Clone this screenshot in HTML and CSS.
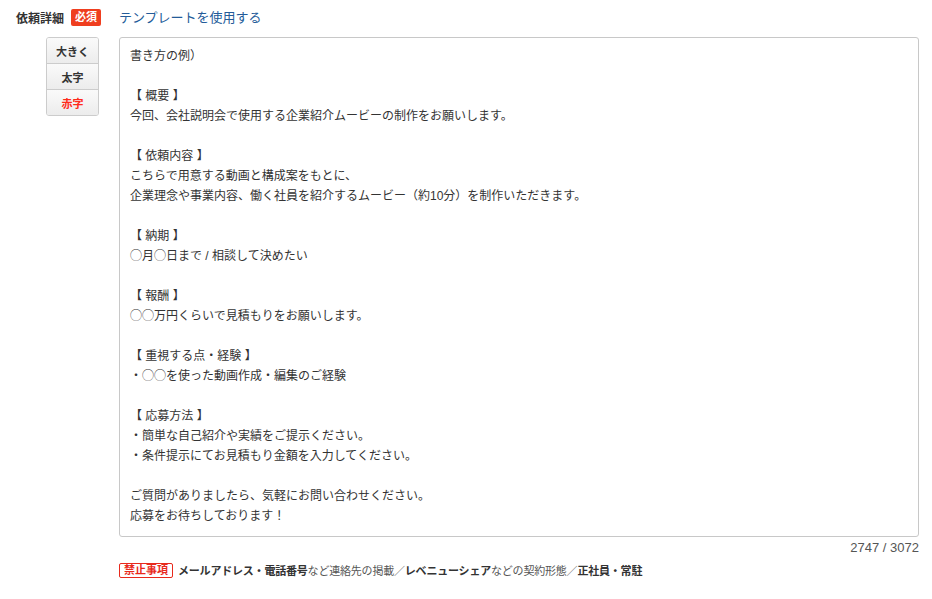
FILE: index.html
```html
<html>
<head>
    <meta charset="utf-8">
    <link rel="stylesheet" href="styles.css">
</head>
<body>
    <div class="form_row">
        <div class="label_cell">
            <span class="label_text">依頼詳細</span>
            <span class="required">必須</span>
        </div>
        <div class="head_cell">
            <a class="template_link" href="#">テンプレートを使用する</a>
        </div>

        <div class="tool_cell">
            <div class="toolbar">
                <button class="tool_btn">大きく</button>
                <button class="tool_btn">太字</button>
                <button class="tool_btn tool_red">赤字</button>
            </div>
        </div>
        <div class="body_cell">
            <div class="editor">書き方の例）

【 概要 】
今回、会社説明会で使用する企業紹介ムービーの制作をお願いします。

【 依頼内容 】
こちらで用意する動画と構成案をもとに、
企業理念や事業内容、働く社員を紹介するムービー（約10分）を制作いただきます。

【 納期 】
◯月◯日まで / 相談して決めたい

【 報酬 】
◯◯万円くらいで見積もりをお願いします。

【 重視する点・経験 】
・◯◯を使った動画作成・編集のご経験

【 応募方法 】
・簡単な自己紹介や実績をご提示ください。
・条件提示にてお見積もり金額を入力してください。

ご質問がありましたら、気軽にお問い合わせください。
応募をお待ちしております！</div>
            <div class="counter">2747 / 3072</div>
            <div class="notice">
                <span class="ban">禁止事項</span>
                <b>メールアドレス・電話番号</b>など連絡先の掲載／<b>レベニューシェア</b>などの契約形態／<b>正社員・常駐</b>
            </div>
        </div>
    </div>
</body>
</html>
```
FILE: styles.css
```css
html {
    box-sizing: border-box;
}

body {
    margin: 0;
    background-color: #ffffff;
    color: #333333;
    font-family: "Liberation Sans", "Noto Sans CJK JP", sans-serif;
    font-size: 12px;
}

.form_row {
    display: grid;
    grid-template-columns: 103px 800px;
    padding: 8px 0 0 16px;
}

.label_cell {
    display: flex;
    align-items: center;
    gap: 7px;
    height: 18px;
}

.label_text {
    font-weight: 700;
    font-size: 12px;
    color: #333333;
}

.required {
    background-color: #ef3e1f;
    color: #ffffff;
    font-size: 11px;
    font-weight: 700;
    border-radius: 2px;
    padding: 0 4px;
    line-height: 17px;
}

.head_cell {
    display: flex;
    align-items: center;
    height: 17px;
}

.template_link {
    color: #235b99;
    font-size: 13px;
    text-decoration: none;
}

.tool_cell {
    padding-top: 11px;
    display: flex;
    justify-content: flex-end;
    padding-right: 20px;
}

.toolbar {
    display: flex;
    flex-direction: column;
    width: 53px;
    align-self: flex-start;
    border: 1px solid #cccccc;
    border-radius: 3px;
    overflow: hidden;
    box-sizing: border-box;
}

.tool_btn {
    height: 26px;
    border: none;
    border-top: 1px solid #cccccc;
    background: linear-gradient(#fafafa, #ececec);
    font-family: "Liberation Sans", "Noto Sans CJK JP", sans-serif;
    font-size: 11px;
    font-weight: 700;
    color: #333333;
    padding: 0;
}

.tool_btn:first-child {
    border-top: none;
    height: 25px;
}

.tool_red {
    color: #ff2a1a;
}

.body_cell {
    padding-top: 11px;
}

.editor {
    box-sizing: border-box;
    width: 800px;
    height: 500px;
    border: 1px solid #c8c8c8;
    border-radius: 3px;
    padding: 8px 10px;
    white-space: pre-wrap;
    line-height: 20px;
    font-size: 12px;
    color: #333333;
}

.counter {
    text-align: right;
    color: #555555;
    font-size: 13px;
    line-height: 14px;
    margin-top: 4px;
}

.notice {
    margin-top: 7px;
    display: flex;
    align-items: center;
    font-size: 11px;
    color: #555555;
    white-space: nowrap;
    letter-spacing: -0.2px;
}

.notice b {
    color: #333333;
    font-weight: 700;
}

.ban {
    border: 1px solid #e8291c;
    border-radius: 2px;
    color: #e8291c;
    font-weight: 700;
    padding: 0 4px;
    line-height: 13px;
    margin-right: 5px;
    letter-spacing: 0;
}
```
